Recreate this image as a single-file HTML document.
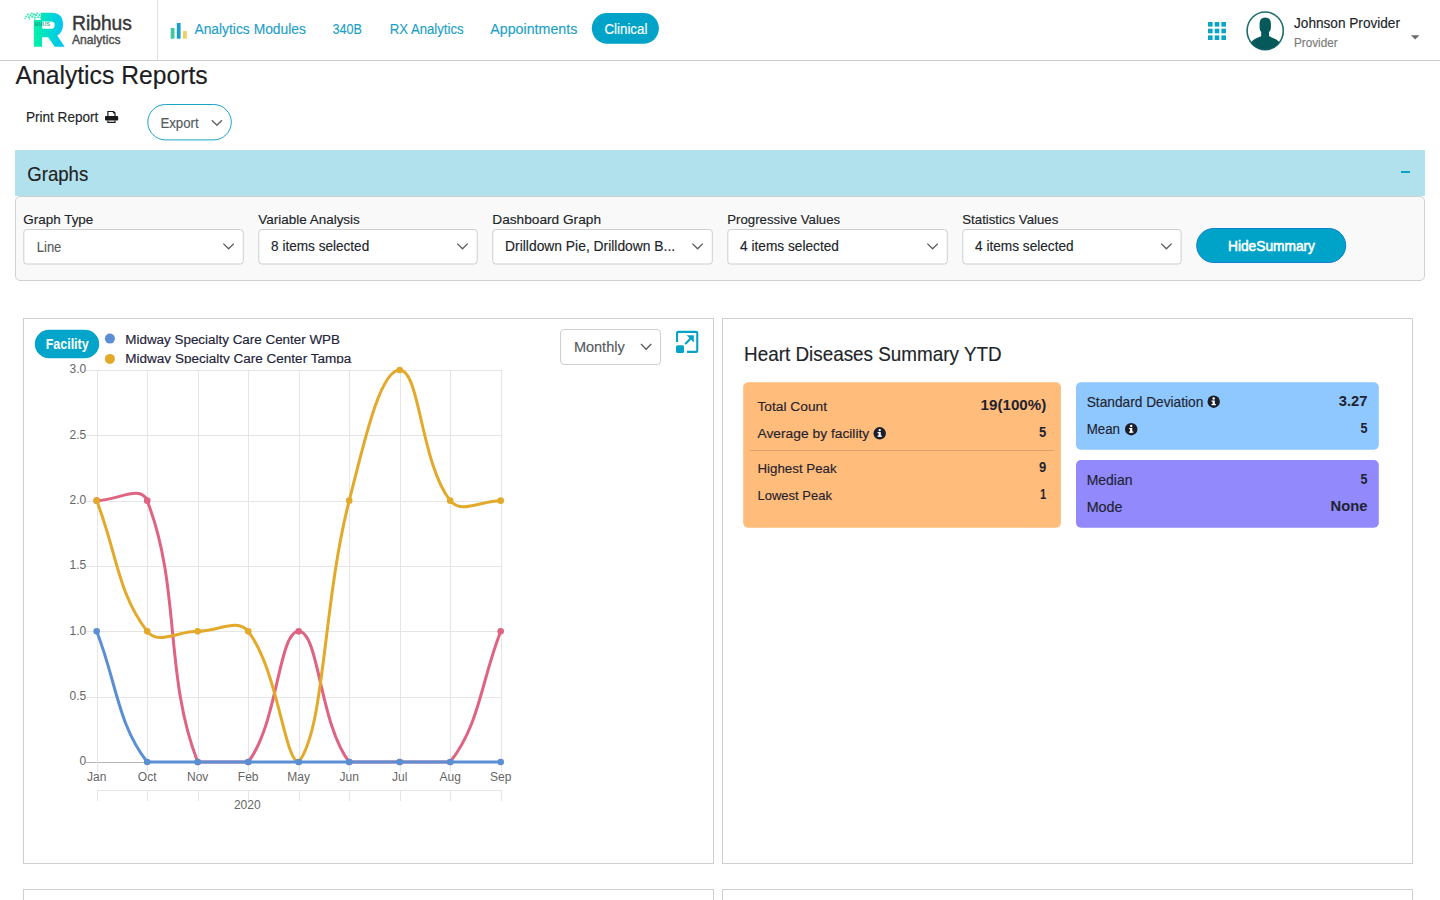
<!DOCTYPE html>
<html><head><meta charset="utf-8"><title>Analytics Reports</title>
<style>html,body{margin:0;padding:0;background:#fff;overflow:hidden}
svg{display:block;font-family:"Liberation Sans",sans-serif}</style></head>
<body><svg width="1440" height="900" viewBox="0 0 1440 900">
<rect x="0" y="60" width="1440" height="1" fill="#cbcbcb"/>
<rect x="157" y="0" width="1" height="60" fill="#dee2e6"/>
<defs><linearGradient id="lg" x1="0" y1="0" x2="1" y2="0">
<stop offset="0" stop-color="#00f2a6"/><stop offset="1" stop-color="#00c2f6"/></linearGradient>
<clipPath id="avclip"><ellipse cx="1265.2" cy="30.85" rx="18.1" ry="18.8"/></clipPath></defs>
<path fill="url(#lg)" fill-rule="evenodd" d="M33.9 20 L40.7 20 L40.7 12.7 L51.5 12.7 Q63 12.7 63 24.5 Q63 32.5 57.2 35.6 L64.6 46.7 L54.7 46.7 L48.2 37.2 L42.1 37.2 L42.1 46.7 L33.9 46.7 Z M42.1 21.5 L51 21.5 Q54.7 21.5 54.7 25.15 Q54.7 28.8 51 28.8 L42.1 28.8 Z"/>
<circle cx="25.3" cy="18.6" r="0.8" fill="#33e3b2"/>
<circle cx="26.2" cy="16.4" r="0.9" fill="#33e3b2"/>
<circle cx="27.8" cy="14.6" r="1.0" fill="#33e3b2"/>
<circle cx="28.9" cy="17.3" r="1.1" fill="#33e3b2"/>
<circle cx="30.4" cy="15.2" r="1.0" fill="#33e3b2"/>
<circle cx="31.8" cy="13.4" r="0.9" fill="#33e3b2"/>
<circle cx="32.3" cy="16.6" r="1.2" fill="#33e3b2"/>
<circle cx="33.9" cy="14.4" r="1.1" fill="#33e3b2"/>
<circle cx="35.2" cy="17.6" r="1.1" fill="#33e3b2"/>
<circle cx="36.1" cy="15.1" r="1.2" fill="#33e3b2"/>
<circle cx="37.4" cy="13.1" r="0.9" fill="#33e3b2"/>
<circle cx="38.2" cy="17.2" r="1.0" fill="#33e3b2"/>
<circle cx="39.4" cy="14.9" r="1.0" fill="#33e3b2"/>
<circle cx="40.5" cy="17.5" r="0.8" fill="#33e3b2"/>
<circle cx="29.5" cy="19.2" r="0.6" fill="#33e3b2"/>
<circle cx="34.6" cy="19.3" r="0.7" fill="#33e3b2"/>
<text x="34.6" y="25.6" font-size="6" fill="#18a07c" font-weight="bold" textLength="15.5" lengthAdjust="spacingAndGlyphs" opacity="0.85">BHUS</text>
<text stroke="#383838" stroke-width="0.45" x="72.00" y="30.00" font-size="20.35" fill="#383838" stroke="#383838" stroke-width="0.15" textLength="59.96" lengthAdjust="spacingAndGlyphs">Ribhus</text>
<text stroke="#4d4d4d" stroke-width="0.4" x="72.00" y="43.50" font-size="12.06" fill="#4d4d4d" stroke="#4d4d4d" stroke-width="0.15" textLength="48.52" lengthAdjust="spacingAndGlyphs">Analytics</text>
<rect x="170.7" y="28" width="3.8" height="10.7" fill="#3cc8a0"/>
<rect x="176.8" y="23" width="3.8" height="15.7" fill="#1a9fc8"/>
<rect x="183" y="31" width="3.8" height="7.7" fill="#f0cf5a"/>
<text x="194.40" y="34.00" font-size="14.90" fill="#1c9fc7" stroke="#1c9fc7" stroke-width="0.15" textLength="111.59" lengthAdjust="spacingAndGlyphs">Analytics Modules</text>
<text x="332.60" y="34.00" font-size="14.90" fill="#1c9fc7" stroke="#1c9fc7" stroke-width="0.15" textLength="29.41" lengthAdjust="spacingAndGlyphs">340B</text>
<text x="389.70" y="34.00" font-size="14.90" fill="#1c9fc7" stroke="#1c9fc7" stroke-width="0.15" textLength="73.88" lengthAdjust="spacingAndGlyphs">RX Analytics</text>
<text x="490.30" y="34.00" font-size="14.90" fill="#1c9fc7" stroke="#1c9fc7" stroke-width="0.15" textLength="87.00" lengthAdjust="spacingAndGlyphs">Appointments</text>
<rect x="591.8" y="13" width="67.1" height="30.7" rx="15.35" fill="#02a3c8"/>
<text x="604.50" y="34.00" font-size="14.90" fill="#ffffff" stroke="#ffffff" stroke-width="0.15" textLength="42.88" lengthAdjust="spacingAndGlyphs">Clinical</text>
<rect x="1208.0" y="22.0" width="4.6" height="4.6" fill="#0aa3c9"/>
<rect x="1208.0" y="28.7" width="4.6" height="4.6" fill="#0aa3c9"/>
<rect x="1208.0" y="35.4" width="4.6" height="4.6" fill="#0aa3c9"/>
<rect x="1214.7" y="22.0" width="4.6" height="4.6" fill="#0aa3c9"/>
<rect x="1214.7" y="28.7" width="4.6" height="4.6" fill="#0aa3c9"/>
<rect x="1214.7" y="35.4" width="4.6" height="4.6" fill="#0aa3c9"/>
<rect x="1221.4" y="22.0" width="4.6" height="4.6" fill="#0aa3c9"/>
<rect x="1221.4" y="28.7" width="4.6" height="4.6" fill="#0aa3c9"/>
<rect x="1221.4" y="35.4" width="4.6" height="4.6" fill="#0aa3c9"/>
<ellipse cx="1265.2" cy="30.85" rx="18.1" ry="18.8" fill="#fff" stroke="#1f6d6d" stroke-width="1.6"/>
<g clip-path="url(#avclip)" fill="#05595b"><path d="M1259.6 23.5 Q1259.6 17.5 1265.2 17.5 Q1270.9 17.5 1270.9 23.5 L1270.9 27.5 Q1270.9 31 1269.1 32 L1269.1 36.3 Q1278 39.5 1279 42 L1282 52 L1248 52 L1251.5 42 Q1252.5 39.5 1261.2 36.3 L1261.2 32 Q1259.6 31 1259.6 27.5 Z"/></g>
<text x="1294.00" y="27.90" font-size="14.39" fill="#212529" stroke="#212529" stroke-width="0.15" textLength="105.97" lengthAdjust="spacingAndGlyphs">Johnson Provider</text>
<text x="1294.00" y="46.70" font-size="12.94" fill="#7a7a7a" stroke="#7a7a7a" stroke-width="0.15" textLength="43.59" lengthAdjust="spacingAndGlyphs">Provider</text>
<path d="M1411 35.2 L1419.4 35.2 L1415.2 39.6 Z" fill="#6b6b6b"/>
<text x="15.50" y="83.80" font-size="25.73" fill="#1d1d24" stroke="#1d1d24" stroke-width="0.15" textLength="192.12" lengthAdjust="spacingAndGlyphs">Analytics Reports</text>
<text x="25.90" y="121.60" font-size="13.95" fill="#212529" stroke="#212529" stroke-width="0.15" textLength="72.51" lengthAdjust="spacingAndGlyphs">Print Report</text>
<g fill="#1a1a1a"><path d="M107.3 111 L113.8 111 L115.6 112.8 L115.6 116.3 L114.4 116.3 L114.4 113.4 L112.9 113.4 L112.9 112.1 L108.5 112.1 L108.5 116.3 L107.3 116.3 Z"/><rect x="105" y="116" width="13.2" height="4.6" rx="1"/><path d="M107.3 120.5 L108.5 120.5 L108.5 121.8 L114.4 121.8 L114.4 120.5 L115.6 120.5 L115.6 123 L107.3 123 Z"/></g>
<rect x="147.8" y="104.5" width="83.5" height="35.4" rx="17.7" fill="#fff" stroke="#18a3c8" stroke-width="1"/>
<text x="160.40" y="128.00" font-size="13.95" fill="#555a60" stroke="#555a60" stroke-width="0.15" textLength="38.30" lengthAdjust="spacingAndGlyphs">Export</text>
<path d="M211.8 120.3 L216.9 125.3 L222 120.3" fill="none" stroke="#666" stroke-width="1.5"/>
<rect x="15.5" y="196.5" width="1409" height="84" rx="4.5" fill="#f9f9f9" stroke="#d0d0d0"/>
<rect x="15" y="150" width="1410" height="46" fill="#b1e1ed"/>
<text x="27.20" y="180.90" font-size="20.64" fill="#222" stroke="#222" stroke-width="0.15" textLength="61.09" lengthAdjust="spacingAndGlyphs">Graphs</text>
<rect x="1401" y="171" width="9" height="2" fill="#0aa3c9"/>
<rect x="23.8" y="229.5" width="219.5" height="34.5" rx="3" fill="#fff" stroke="#cfcfcf"/>
<text x="23.30" y="223.70" font-size="13.37" fill="#212529" stroke="#212529" stroke-width="0.15" textLength="70.03" lengthAdjust="spacingAndGlyphs">Graph Type</text>
<text x="36.80" y="252.00" font-size="14.68" fill="#555a60" stroke="#555a60" stroke-width="0.15" textLength="24.51" lengthAdjust="spacingAndGlyphs">Line</text>
<path d="M223.4 243.6 L228.6 248.8 L233.8 243.6" fill="none" stroke="#5a5a5a" stroke-width="1.3"/>
<rect x="258.8" y="229.5" width="218.4" height="34.5" rx="3" fill="#fff" stroke="#cfcfcf"/>
<text x="258.30" y="223.70" font-size="13.37" fill="#212529" stroke="#212529" stroke-width="0.15" textLength="101.52" lengthAdjust="spacingAndGlyphs">Variable Analysis</text>
<text x="271.10" y="250.80" font-size="14.24" fill="#212529" stroke="#212529" stroke-width="0.15" textLength="98.11" lengthAdjust="spacingAndGlyphs">8 items selected</text>
<path d="M457.3 243.6 L462.5 248.8 L467.7 243.6" fill="none" stroke="#5a5a5a" stroke-width="1.3"/>
<rect x="492.8" y="229.5" width="219.5" height="34.5" rx="3" fill="#fff" stroke="#cfcfcf"/>
<text x="492.30" y="223.70" font-size="13.37" fill="#212529" stroke="#212529" stroke-width="0.15" textLength="108.69" lengthAdjust="spacingAndGlyphs">Dashboard Graph</text>
<text x="505.10" y="250.80" font-size="14.24" fill="#212529" stroke="#212529" stroke-width="0.15" textLength="170.03" lengthAdjust="spacingAndGlyphs">Drilldown Pie, Drilldown B...</text>
<path d="M692.4 243.6 L697.6 248.8 L702.8 243.6" fill="none" stroke="#5a5a5a" stroke-width="1.3"/>
<rect x="727.8" y="229.5" width="219.5" height="34.5" rx="3" fill="#fff" stroke="#cfcfcf"/>
<text x="727.30" y="223.70" font-size="13.37" fill="#212529" stroke="#212529" stroke-width="0.15" textLength="112.82" lengthAdjust="spacingAndGlyphs">Progressive Values</text>
<text x="740.10" y="250.80" font-size="14.24" fill="#212529" stroke="#212529" stroke-width="0.15" textLength="98.81" lengthAdjust="spacingAndGlyphs">4 items selected</text>
<path d="M927.4 243.6 L932.6 248.8 L937.8 243.6" fill="none" stroke="#5a5a5a" stroke-width="1.3"/>
<rect x="962.8" y="229.5" width="218.3" height="34.5" rx="3" fill="#fff" stroke="#cfcfcf"/>
<text x="962.30" y="223.70" font-size="13.37" fill="#212529" stroke="#212529" stroke-width="0.15" textLength="96.03" lengthAdjust="spacingAndGlyphs">Statistics Values</text>
<text x="975.10" y="250.80" font-size="14.24" fill="#212529" stroke="#212529" stroke-width="0.15" textLength="98.51" lengthAdjust="spacingAndGlyphs">4 items selected</text>
<path d="M1161.2 243.6 L1166.4 248.8 L1171.6 243.6" fill="none" stroke="#5a5a5a" stroke-width="1.3"/>
<rect x="1196.7" y="228.5" width="149" height="34" rx="17" fill="#00a3c8" stroke="#0b7fd8" stroke-width="1"/>
<text x="1228.00" y="251.10" font-size="14.39" fill="#ffffff" stroke="#ffffff" stroke-width="0.55" textLength="87.00" lengthAdjust="spacingAndGlyphs">HideSummary</text>
<rect x="23.5" y="318.5" width="690" height="545" fill="#fff" stroke="#cfcfcf"/>
<rect x="722.5" y="318.5" width="690" height="545" fill="#fff" stroke="#cfcfcf"/>
<rect x="23.5" y="889.5" width="690" height="40" fill="#fff" stroke="#cfcfcf"/>
<rect x="722.5" y="889.5" width="690" height="40" fill="#fff" stroke="#cfcfcf"/>
<rect x="34.8" y="329.7" width="64.4" height="28.6" rx="14.3" fill="#02a5c9"/>
<text x="45.70" y="349.00" font-size="14.24" fill="#ffffff" font-weight="bold" textLength="43.01" lengthAdjust="spacingAndGlyphs">Facility</text>
<circle cx="109.9" cy="338.6" r="5" fill="#5b8fd4"/>
<circle cx="109.9" cy="358.9" r="5" fill="#e3a92a"/>
<svg x="0" y="0" width="1440" height="363.5" overflow="hidden">
<text x="125.30" y="343.60" font-size="12.65" fill="#23233a" stroke="#23233a" stroke-width="0.15" textLength="214.71" lengthAdjust="spacingAndGlyphs">Midway Specialty Care Center WPB</text>
<text x="125.30" y="362.60" font-size="12.65" fill="#23233a" stroke="#23233a" stroke-width="0.15" textLength="225.95" lengthAdjust="spacingAndGlyphs">Midway Specialty Care Center Tampa</text>
</svg>
<rect x="560.5" y="329.5" width="100" height="35" rx="3.5" fill="#fff" stroke="#cfcfcf"/>
<text x="573.90" y="352.20" font-size="14.53" fill="#555a60" stroke="#555a60" stroke-width="0.15" textLength="50.82" lengthAdjust="spacingAndGlyphs">Monthly</text>
<path d="M641 344 L646.1 349.3 L651.2 344" fill="none" stroke="#5a5a5a" stroke-width="1.3"/>
<g fill="#06a2c8"><path d="M676 342 L676 333 Q676 330.8 678.2 330.8 L696.1 330.8 Q698.3 330.8 698.3 333 L698.3 350.7 Q698.3 352.9 696.1 352.9 L687 352.9 L687 350.8 L696.2 350.8 L696.2 332.9 L678.1 332.9 L678.1 342 Z"/><rect x="676" y="345.2" width="8" height="7.7" rx="1.5"/><path d="M686.6 335.2 L693.8 335.2 L693.8 342.4 Z"/><path d="M685.2 344 L691 338.2" stroke="#06a2c8" stroke-width="2.2" fill="none"/></g>
<rect x="86" y="762" width="416" height="1" fill="#b5b5b5"/>
<rect x="86" y="697" width="416" height="1" fill="#e5e5e5"/>
<rect x="86" y="631" width="416" height="1" fill="#e5e5e5"/>
<rect x="86" y="566" width="416" height="1" fill="#e5e5e5"/>
<rect x="86" y="501" width="416" height="1" fill="#e5e5e5"/>
<rect x="86" y="435" width="416" height="1" fill="#e5e5e5"/>
<rect x="86" y="370" width="416" height="1" fill="#e5e5e5"/>
<rect x="97" y="370" width="1" height="402" fill="#e5e5e5"/>
<rect x="97" y="791" width="1" height="10" fill="#e5e5e5"/>
<rect x="147" y="370" width="1" height="402" fill="#e5e5e5"/>
<rect x="147" y="791" width="1" height="10" fill="#e5e5e5"/>
<rect x="198" y="370" width="1" height="402" fill="#e5e5e5"/>
<rect x="198" y="791" width="1" height="10" fill="#e5e5e5"/>
<rect x="248" y="370" width="1" height="402" fill="#e5e5e5"/>
<rect x="248" y="791" width="1" height="10" fill="#e5e5e5"/>
<rect x="299" y="370" width="1" height="402" fill="#e5e5e5"/>
<rect x="299" y="791" width="1" height="10" fill="#e5e5e5"/>
<rect x="349" y="370" width="1" height="402" fill="#e5e5e5"/>
<rect x="349" y="791" width="1" height="10" fill="#e5e5e5"/>
<rect x="400" y="370" width="1" height="402" fill="#e5e5e5"/>
<rect x="400" y="791" width="1" height="10" fill="#e5e5e5"/>
<rect x="450" y="370" width="1" height="402" fill="#e5e5e5"/>
<rect x="450" y="791" width="1" height="10" fill="#e5e5e5"/>
<rect x="501" y="370" width="1" height="402" fill="#e5e5e5"/>
<rect x="501" y="791" width="1" height="10" fill="#e5e5e5"/>
<rect x="97" y="790" width="405" height="1" fill="#e5e5e5"/>
<text x="79.54" y="765.40" font-size="12.00" fill="#666666" textLength="6.67" lengthAdjust="spacingAndGlyphs">0</text>
<text x="69.52" y="700.07" font-size="12.00" fill="#666666" textLength="16.68" lengthAdjust="spacingAndGlyphs">0.5</text>
<text x="69.52" y="634.73" font-size="12.00" fill="#666666" textLength="16.68" lengthAdjust="spacingAndGlyphs">1.0</text>
<text x="69.52" y="569.40" font-size="12.00" fill="#666666" textLength="16.68" lengthAdjust="spacingAndGlyphs">1.5</text>
<text x="69.52" y="504.07" font-size="12.00" fill="#666666" textLength="16.68" lengthAdjust="spacingAndGlyphs">2.0</text>
<text x="69.52" y="438.73" font-size="12.00" fill="#666666" textLength="16.68" lengthAdjust="spacingAndGlyphs">2.5</text>
<text x="69.52" y="373.40" font-size="12.00" fill="#666666" textLength="16.68" lengthAdjust="spacingAndGlyphs">3.0</text>
<text x="87.04" y="780.90" font-size="12.00" fill="#666666" textLength="19.35" lengthAdjust="spacingAndGlyphs">Jan</text>
<text x="137.87" y="780.90" font-size="12.00" fill="#666666" textLength="18.67" lengthAdjust="spacingAndGlyphs">Oct</text>
<text x="187.02" y="780.90" font-size="12.00" fill="#666666" textLength="21.34" lengthAdjust="spacingAndGlyphs">Nov</text>
<text x="237.85" y="780.90" font-size="12.00" fill="#666666" textLength="20.68" lengthAdjust="spacingAndGlyphs">Feb</text>
<text x="287.36" y="780.90" font-size="12.00" fill="#666666" textLength="22.67" lengthAdjust="spacingAndGlyphs">May</text>
<text x="339.54" y="780.90" font-size="12.00" fill="#666666" textLength="19.35" lengthAdjust="spacingAndGlyphs">Jun</text>
<text x="392.02" y="780.90" font-size="12.00" fill="#666666" textLength="15.34" lengthAdjust="spacingAndGlyphs">Jul</text>
<text x="439.52" y="780.90" font-size="12.00" fill="#666666" textLength="21.35" lengthAdjust="spacingAndGlyphs">Aug</text>
<text x="490.02" y="780.90" font-size="12.00" fill="#666666" textLength="21.35" lengthAdjust="spacingAndGlyphs">Sep</text>
<text x="233.95" y="808.90" font-size="12.00" fill="#666666" textLength="26.70" lengthAdjust="spacingAndGlyphs">2020</text>
<path d="M96.70 500.67 C116.90 500.67 140.76 484.00 147.20 500.67 C181.16 588.53 163.74 674.14 197.70 762.00 C204.14 762.00 237.50 762.00 248.20 762.00 C277.90 723.58 278.50 631.33 298.70 631.33 C318.90 631.33 319.50 723.58 349.20 762.00 C359.90 762.00 379.50 762.00 399.70 762.00 C419.90 762.00 439.50 762.00 450.20 762.00 C479.90 723.58 480.50 683.60 500.70 631.33" fill="none" stroke="#de6482" stroke-width="3"/>
<circle cx="96.70" cy="500.67" r="3.3" fill="#de6482"/>
<circle cx="147.20" cy="500.67" r="3.3" fill="#de6482"/>
<circle cx="197.70" cy="762.00" r="3.3" fill="#de6482"/>
<circle cx="248.20" cy="762.00" r="3.3" fill="#de6482"/>
<circle cx="298.70" cy="631.33" r="3.3" fill="#de6482"/>
<circle cx="349.20" cy="762.00" r="3.3" fill="#de6482"/>
<circle cx="399.70" cy="762.00" r="3.3" fill="#de6482"/>
<circle cx="450.20" cy="762.00" r="3.3" fill="#de6482"/>
<circle cx="500.70" cy="631.33" r="3.3" fill="#de6482"/>
<path d="M96.70 500.67 C116.90 552.93 117.50 592.92 147.20 631.33 C157.90 645.18 177.50 631.33 197.70 631.33 C217.90 631.33 237.50 617.48 248.20 631.33 C277.90 669.75 284.77 762.00 298.70 762.00 C325.17 727.76 322.73 603.40 349.20 500.67 C363.13 446.60 379.50 370.00 399.70 370.00 C419.90 370.00 420.50 462.25 450.20 500.67 C460.90 514.52 480.50 500.67 500.70 500.67" fill="none" stroke="#e3a92a" stroke-width="3"/>
<circle cx="96.70" cy="500.67" r="3.3" fill="#e3a92a"/>
<circle cx="147.20" cy="631.33" r="3.3" fill="#e3a92a"/>
<circle cx="197.70" cy="631.33" r="3.3" fill="#e3a92a"/>
<circle cx="248.20" cy="631.33" r="3.3" fill="#e3a92a"/>
<circle cx="298.70" cy="762.00" r="3.3" fill="#e3a92a"/>
<circle cx="349.20" cy="500.67" r="3.3" fill="#e3a92a"/>
<circle cx="399.70" cy="370.00" r="3.3" fill="#e3a92a"/>
<circle cx="450.20" cy="500.67" r="3.3" fill="#e3a92a"/>
<circle cx="500.70" cy="500.67" r="3.3" fill="#e3a92a"/>
<path d="M96.70 631.33 C116.90 683.60 117.50 723.58 147.20 762.00 C157.90 762.00 177.50 762.00 197.70 762.00 C217.90 762.00 228.00 762.00 248.20 762.00 C268.40 762.00 278.50 762.00 298.70 762.00 C318.90 762.00 329.00 762.00 349.20 762.00 C369.40 762.00 379.50 762.00 399.70 762.00 C419.90 762.00 430.00 762.00 450.20 762.00 C470.40 762.00 480.50 762.00 500.70 762.00" fill="none" stroke="#5b8fd4" stroke-width="3"/>
<circle cx="96.70" cy="631.33" r="3.3" fill="#5b8fd4"/>
<circle cx="147.20" cy="762.00" r="3.3" fill="#5b8fd4"/>
<circle cx="197.70" cy="762.00" r="3.3" fill="#5b8fd4"/>
<circle cx="248.20" cy="762.00" r="3.3" fill="#5b8fd4"/>
<circle cx="298.70" cy="762.00" r="3.3" fill="#5b8fd4"/>
<circle cx="349.20" cy="762.00" r="3.3" fill="#5b8fd4"/>
<circle cx="399.70" cy="762.00" r="3.3" fill="#5b8fd4"/>
<circle cx="450.20" cy="762.00" r="3.3" fill="#5b8fd4"/>
<circle cx="500.70" cy="762.00" r="3.3" fill="#5b8fd4"/>
<text x="744.10" y="360.70" font-size="19.62" fill="#212529" stroke="#212529" stroke-width="0.15" textLength="257.54" lengthAdjust="spacingAndGlyphs">Heart Diseases Summary YTD</text>
<rect x="743.2" y="382.3" width="317.7" height="145.5" rx="5" fill="#ffbc7a"/>
<rect x="750" y="450" width="303.7" height="1" fill="#d9a26c"/>
<rect x="1076" y="382.3" width="302.8" height="67.5" rx="5" fill="#8fc8fe"/>
<rect x="1076" y="460.1" width="302.8" height="67.7" rx="5" fill="#9189fc"/>
<text x="757.50" y="410.80" font-size="13.23" fill="#1f2330" stroke="#1f2330" stroke-width="0.15" textLength="69.48" lengthAdjust="spacingAndGlyphs">Total Count</text>
<text x="757.50" y="438.00" font-size="13.52" fill="#1f2330" stroke="#1f2330" stroke-width="0.15" textLength="111.73" lengthAdjust="spacingAndGlyphs">Average by facility</text>
<text x="757.50" y="472.80" font-size="13.23" fill="#1f2330" stroke="#1f2330" stroke-width="0.15" textLength="79.11" lengthAdjust="spacingAndGlyphs">Highest Peak</text>
<text x="757.50" y="500.00" font-size="13.37" fill="#1f2330" stroke="#1f2330" stroke-width="0.15" textLength="74.44" lengthAdjust="spacingAndGlyphs">Lowest Peak</text>
<text x="980.60" y="409.80" font-size="15.00" fill="#1f2330" font-weight="bold" textLength="65.62" lengthAdjust="spacingAndGlyphs">19(100%)</text>
<text x="1039.00" y="436.50" font-size="15.00" fill="#1f2330" font-weight="bold" textLength="7.22" lengthAdjust="spacingAndGlyphs">5</text>
<text x="1039.00" y="472.00" font-size="15.00" fill="#1f2330" font-weight="bold" textLength="7.22" lengthAdjust="spacingAndGlyphs">9</text>
<text x="1040.00" y="498.90" font-size="15.00" fill="#1f2330" font-weight="bold" textLength="6.21" lengthAdjust="spacingAndGlyphs">1</text>
<text x="1086.70" y="406.70" font-size="14.10" fill="#1f2330" stroke="#1f2330" stroke-width="0.15" textLength="116.61" lengthAdjust="spacingAndGlyphs">Standard Deviation</text>
<text x="1086.70" y="434.20" font-size="13.81" fill="#1f2330" stroke="#1f2330" stroke-width="0.15" textLength="33.32" lengthAdjust="spacingAndGlyphs">Mean</text>
<text x="1086.70" y="485.00" font-size="14.10" fill="#1f2330" stroke="#1f2330" stroke-width="0.15" textLength="45.80" lengthAdjust="spacingAndGlyphs">Median</text>
<text x="1086.70" y="512.00" font-size="13.81" fill="#1f2330" stroke="#1f2330" stroke-width="0.15" textLength="35.82" lengthAdjust="spacingAndGlyphs">Mode</text>
<text x="1338.80" y="405.90" font-size="15.00" fill="#1f2330" font-weight="bold" textLength="28.72" lengthAdjust="spacingAndGlyphs">3.27</text>
<text x="1360.50" y="432.80" font-size="15.00" fill="#1f2330" font-weight="bold" textLength="7.01" lengthAdjust="spacingAndGlyphs">5</text>
<text x="1360.50" y="483.80" font-size="15.00" fill="#1f2330" font-weight="bold" textLength="7.01" lengthAdjust="spacingAndGlyphs">5</text>
<text x="1330.60" y="510.80" font-size="15.00" fill="#1f2330" font-weight="bold" textLength="36.90" lengthAdjust="spacingAndGlyphs">None</text>
<circle cx="879.7" cy="433.3" r="6.2" fill="#1b1f2a"/><rect x="878.6" y="432.1" width="2.2" height="4.6" fill="#fff"/><rect x="877.5" y="435.6" width="4.4" height="1.2" fill="#fff"/><rect x="877.5" y="432.1" width="1.6" height="1.1" fill="#fff"/><circle cx="879.7" cy="430.1" r="1.2" fill="#fff"/>
<circle cx="1213.7" cy="401.7" r="6.2" fill="#1b1f2a"/><rect x="1212.6" y="400.5" width="2.2" height="4.6" fill="#fff"/><rect x="1211.5" y="404.0" width="4.4" height="1.2" fill="#fff"/><rect x="1211.5" y="400.5" width="1.6" height="1.1" fill="#fff"/><circle cx="1213.7" cy="398.5" r="1.2" fill="#fff"/>
<circle cx="1131.2" cy="429.2" r="6.2" fill="#1b1f2a"/><rect x="1130.1" y="428.0" width="2.2" height="4.6" fill="#fff"/><rect x="1129.0" y="431.5" width="4.4" height="1.2" fill="#fff"/><rect x="1129.0" y="428.0" width="1.6" height="1.1" fill="#fff"/><circle cx="1131.2" cy="426.0" r="1.2" fill="#fff"/>
</svg></body></html>
